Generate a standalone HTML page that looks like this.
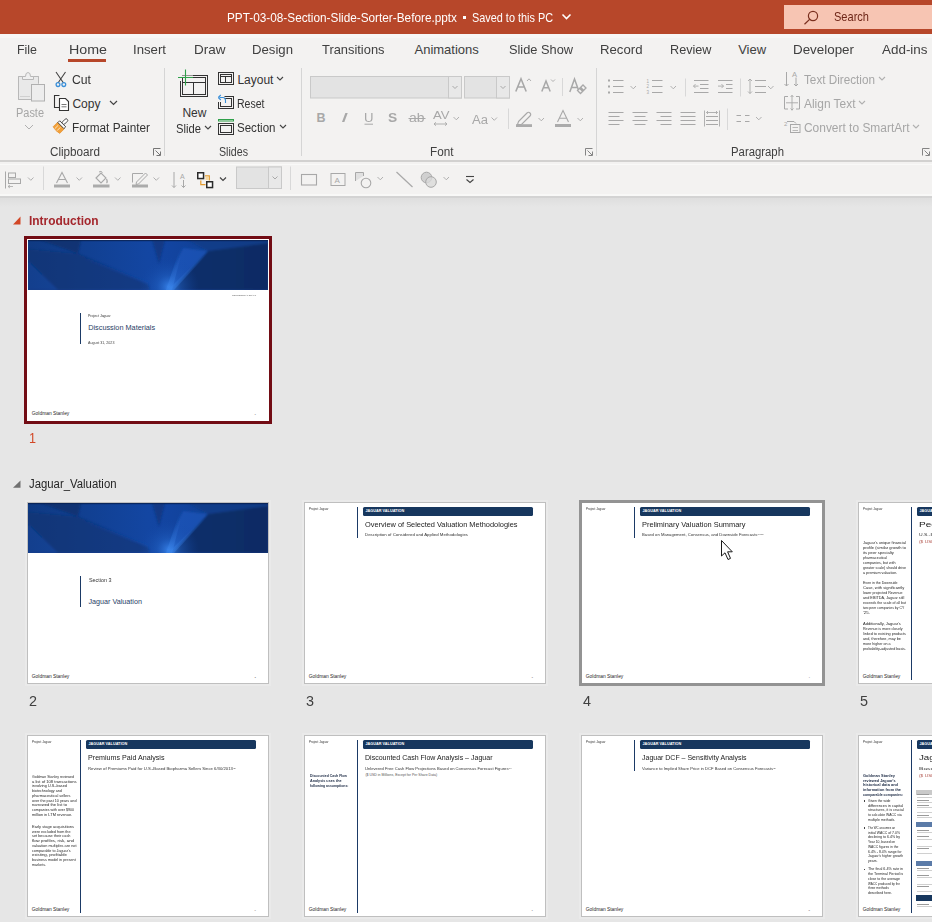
<!DOCTYPE html><html><head><meta charset="utf-8"><style>
html,body{margin:0;padding:0}
body{width:932px;height:922px;overflow:hidden;position:relative;background:#E6E6E6;font-family:'Liberation Sans', sans-serif}
</style></head><body>
<div style="position:absolute;left:0px;top:0px;width:932px;height:34px;background:#B7472A;"></div>
<div style="position:absolute;left:784px;top:5px;width:148px;height:24px;background:#F7C5B3;"></div>
<svg style="position:absolute;left:802px;top:9px;" width="18" height="16" viewBox="0 0 18 16"><circle cx="11" cy="7" r="4.6" fill="none" stroke="#7A2F1E" stroke-width="1.2"/><line x1="7.6" y1="10.4" x2="2.5" y2="15.3" stroke="#7A2F1E" stroke-width="1.3"/></svg>
<span id="t0" style="position:absolute;left:834.00px;top:10.25px;font-size:13px;line-height:13px;color:#6E2618;font-weight:400;white-space:nowrap;transform:scaleX(0.8495);transform-origin:0 0;">Search</span>
<span id="t1" style="position:absolute;left:227.00px;top:10.95px;font-size:13px;line-height:13px;color:#FFFFFF;font-weight:400;white-space:nowrap;transform:scaleX(0.9069);transform-origin:0 0;">PPT-03-08-Section-Slide-Sorter-Before.pptx</span>
<div style="position:absolute;left:462.5px;top:15.5px;width:3px;height:3px;background:#FFFFFF;"></div>
<span id="t2" style="position:absolute;left:471.50px;top:10.95px;font-size:13px;line-height:13px;color:#FFFFFF;font-weight:400;white-space:nowrap;transform:scaleX(0.8365);transform-origin:0 0;">Saved to this PC</span>
<svg style="position:absolute;left:561px;top:13px;" width="11" height="8" viewBox="0 0 11 8"><polyline points="1.5,1.5 5.5,5.5 9.5,1.5" fill="none" stroke="#fff" stroke-width="1.6"/></svg>
<div style="position:absolute;left:0px;top:34px;width:932px;height:126px;background:#F3F2F1;"></div>
<div style="position:absolute;left:0px;top:34px;width:932px;height:4px;background:#F7F6F5;"></div>
<div style="position:absolute;left:0px;top:160px;width:932px;height:2px;background:#D2D1D0;"></div>
<div style="position:absolute;left:0px;top:162px;width:932px;height:32px;background:#F3F2F1;"></div>
<div style="position:absolute;left:0px;top:163.5px;width:932px;height:1.5px;background:#F9F9F8;"></div>
<div style="position:absolute;left:0px;top:194px;width:932px;height:2px;background:#F8F8F7;"></div>
<div style="position:absolute;left:0px;top:196px;width:932px;height:2.2px;background:#D3D3D3;"></div>
<div style="position:absolute;left:0px;top:198.2px;width:932px;height:9px;background:linear-gradient(#DEDEDE,#E6E6E6);"></div>
<span id="t3" style="position:absolute;left:17.00px;top:43.25px;font-size:13px;line-height:13px;color:#404040;font-weight:400;white-space:nowrap;transform:scaleX(0.9545);transform-origin:0 0;">File</span>
<span id="t4" style="position:absolute;left:68.50px;top:43.25px;font-size:13px;line-height:13px;color:#404040;font-weight:400;white-space:nowrap;transform:scaleX(1.0955);transform-origin:0 0;">Home</span>
<span id="t5" style="position:absolute;left:133.00px;top:43.25px;font-size:13px;line-height:13px;color:#404040;font-weight:400;white-space:nowrap;transform:scaleX(1.0149);transform-origin:0 0;">Insert</span>
<span id="t6" style="position:absolute;left:194.00px;top:43.25px;font-size:13px;line-height:13px;color:#404040;font-weight:400;white-space:nowrap;transform:scaleX(1.0381);transform-origin:0 0;">Draw</span>
<span id="t7" style="position:absolute;left:252.00px;top:43.25px;font-size:13px;line-height:13px;color:#404040;font-weight:400;white-space:nowrap;transform:scaleX(1.0131);transform-origin:0 0;">Design</span>
<span id="t8" style="position:absolute;left:321.50px;top:43.25px;font-size:13px;line-height:13px;color:#404040;font-weight:400;white-space:nowrap;transform:scaleX(0.9903);transform-origin:0 0;">Transitions</span>
<span id="t9" style="position:absolute;left:414.50px;top:43.25px;font-size:13px;line-height:13px;color:#404040;font-weight:400;white-space:nowrap;">Animations</span>
<span id="t10" style="position:absolute;left:508.80px;top:43.25px;font-size:13px;line-height:13px;color:#404040;font-weight:400;white-space:nowrap;transform:scaleX(0.9839);transform-origin:0 0;">Slide Show</span>
<span id="t11" style="position:absolute;left:600.20px;top:43.25px;font-size:13px;line-height:13px;color:#404040;font-weight:400;white-space:nowrap;transform:scaleX(1.0138);transform-origin:0 0;">Record</span>
<span id="t12" style="position:absolute;left:670.00px;top:43.25px;font-size:13px;line-height:13px;color:#404040;font-weight:400;white-space:nowrap;transform:scaleX(0.9736);transform-origin:0 0;">Review</span>
<span id="t13" style="position:absolute;left:738.20px;top:43.25px;font-size:13px;line-height:13px;color:#404040;font-weight:400;white-space:nowrap;">View</span>
<span id="t14" style="position:absolute;left:793.00px;top:43.25px;font-size:13px;line-height:13px;color:#404040;font-weight:400;white-space:nowrap;transform:scaleX(1.0293);transform-origin:0 0;">Developer</span>
<span id="t15" style="position:absolute;left:882.40px;top:43.25px;font-size:13px;line-height:13px;color:#404040;font-weight:400;white-space:nowrap;transform:scaleX(1.0323);transform-origin:0 0;">Add-ins</span>
<div style="position:absolute;left:68px;top:59px;width:38px;height:3px;background:#B7472A;"></div>
<span id="t16" style="position:absolute;left:16.00px;top:107.00px;font-size:12px;line-height:12px;color:#A6A6A6;font-weight:400;white-space:nowrap;transform:scaleX(0.9124);transform-origin:0 0;">Paste</span>
<svg style="position:absolute;left:24px;top:124px;" width="10" height="6" viewBox="0 0 10 6"><polyline points="1,1 5,5 9,1" fill="none" stroke="#B0B0B0" stroke-width="1"/></svg>
<span id="t17" style="position:absolute;left:72.40px;top:73.60px;font-size:12px;line-height:12px;color:#333333;font-weight:400;white-space:nowrap;transform:scaleX(1.0167);transform-origin:0 0;">Cut</span>
<span id="t18" style="position:absolute;left:72.40px;top:97.70px;font-size:12px;line-height:12px;color:#333333;font-weight:400;white-space:nowrap;">Copy</span>
<svg style="position:absolute;left:109px;top:100px;" width="9" height="6" viewBox="0 0 9 6"><polyline points="1,1 4.5,4.5 8,1" fill="none" stroke="#444" stroke-width="1.2"/></svg>
<span id="t19" style="position:absolute;left:72.40px;top:121.70px;font-size:12px;line-height:12px;color:#333333;font-weight:400;white-space:nowrap;transform:scaleX(0.9829);transform-origin:0 0;">Format Painter</span>
<span id="t20" style="position:absolute;left:49.80px;top:145.80px;font-size:12px;line-height:12px;color:#404040;font-weight:400;white-space:nowrap;transform:scaleX(0.9732);transform-origin:0 0;">Clipboard</span>
<div style="position:absolute;left:164px;top:68px;width:1px;height:88px;background:#D5D5D5;"></div>
<span id="t21" style="position:absolute;left:182.40px;top:106.90px;font-size:12px;line-height:12px;color:#333333;font-weight:400;white-space:nowrap;">New</span>
<span id="t22" style="position:absolute;left:176.40px;top:122.60px;font-size:12px;line-height:12px;color:#333333;font-weight:400;white-space:nowrap;transform:scaleX(0.9368);transform-origin:0 0;">Slide</span>
<svg style="position:absolute;left:204px;top:125px;" width="8" height="6" viewBox="0 0 8 6"><polyline points="1,1 4,4 7,1" fill="none" stroke="#444" stroke-width="1.1"/></svg>
<span id="t23" style="position:absolute;left:237.40px;top:73.60px;font-size:12px;line-height:12px;color:#333333;font-weight:400;white-space:nowrap;">Layout</span>
<svg style="position:absolute;left:276px;top:76px;" width="8" height="6" viewBox="0 0 8 6"><polyline points="1,1 4,4 7,1" fill="none" stroke="#444" stroke-width="1.1"/></svg>
<span id="t24" style="position:absolute;left:237.40px;top:97.70px;font-size:12px;line-height:12px;color:#333333;font-weight:400;white-space:nowrap;transform:scaleX(0.8769);transform-origin:0 0;">Reset</span>
<span id="t25" style="position:absolute;left:237.40px;top:121.70px;font-size:12px;line-height:12px;color:#333333;font-weight:400;white-space:nowrap;transform:scaleX(0.9617);transform-origin:0 0;">Section</span>
<svg style="position:absolute;left:279px;top:124px;" width="8" height="6" viewBox="0 0 8 6"><polyline points="1,1 4,4 7,1" fill="none" stroke="#444" stroke-width="1.1"/></svg>
<span id="t26" style="position:absolute;left:218.50px;top:145.80px;font-size:12px;line-height:12px;color:#404040;font-weight:400;white-space:nowrap;transform:scaleX(0.8872);transform-origin:0 0;">Slides</span>
<div style="position:absolute;left:301px;top:68px;width:1px;height:88px;background:#D5D5D5;"></div>
<span id="t27" style="position:absolute;left:429.60px;top:145.80px;font-size:12px;line-height:12px;color:#404040;font-weight:400;white-space:nowrap;transform:scaleX(0.9785);transform-origin:0 0;">Font</span>
<div style="position:absolute;left:596px;top:68px;width:1px;height:88px;background:#D5D5D5;"></div>
<span id="t28" style="position:absolute;left:731.00px;top:145.80px;font-size:12px;line-height:12px;color:#404040;font-weight:400;white-space:nowrap;transform:scaleX(0.9456);transform-origin:0 0;">Paragraph</span>
<span id="t29" style="position:absolute;left:804.30px;top:73.60px;font-size:12px;line-height:12px;color:#A6A6A6;font-weight:400;white-space:nowrap;transform:scaleX(0.9766);transform-origin:0 0;">Text Direction</span>
<svg style="position:absolute;left:878px;top:76px;" width="8" height="6" viewBox="0 0 8 6"><polyline points="1,1 4,4 7,1" fill="none" stroke="#B0B0B0" stroke-width="1.1"/></svg>
<span id="t30" style="position:absolute;left:803.80px;top:97.70px;font-size:12px;line-height:12px;color:#A6A6A6;font-weight:400;white-space:nowrap;transform:scaleX(0.9940);transform-origin:0 0;">Align Text</span>
<svg style="position:absolute;left:857.5px;top:100px;" width="8" height="6" viewBox="0 0 8 6"><polyline points="1,1 4,4 7,1" fill="none" stroke="#B0B0B0" stroke-width="1.1"/></svg>
<span id="t31" style="position:absolute;left:803.80px;top:121.70px;font-size:12px;line-height:12px;color:#A6A6A6;font-weight:400;white-space:nowrap;transform:scaleX(0.9950);transform-origin:0 0;">Convert to SmartArt</span>
<svg style="position:absolute;left:912px;top:124px;" width="8" height="6" viewBox="0 0 8 6"><polyline points="1,1 4,4 7,1" fill="none" stroke="#B0B0B0" stroke-width="1.1"/></svg>
<svg style="position:absolute;left:13px;top:216px;" width="8" height="9" viewBox="0 0 8 9"><polygon points="7.5,0.5 7.5,8.5 0,8.5" fill="#D24726"/></svg>
<span id="t32" style="position:absolute;left:28.50px;top:214.60px;font-size:12px;line-height:12px;color:#A4262C;font-weight:700;white-space:nowrap;transform:scaleX(0.9931);transform-origin:0 0;">Introduction</span>
<span id="t33" style="position:absolute;left:28.50px;top:429.75px;font-size:15px;line-height:15px;color:#D24726;font-weight:400;white-space:nowrap;transform:scaleX(0.8390);transform-origin:0 0;">1</span>
<svg style="position:absolute;left:13px;top:480px;" width="8" height="8" viewBox="0 0 8 8"><polygon points="7.5,0.5 7.5,7.8 0,7.8" fill="#707070"/></svg>
<span id="t34" style="position:absolute;left:28.50px;top:477.80px;font-size:12px;line-height:12px;color:#262626;font-weight:400;white-space:nowrap;transform:scaleX(0.9458);transform-origin:0 0;">Jaguar_Valuation</span>
<span id="t35" style="position:absolute;left:316.50px;top:111.88px;font-size:12.5px;line-height:12.5px;color:#A8A8A8;font-weight:700;white-space:nowrap;">B</span>
<span id="t36" style="position:absolute;left:341.00px;top:111.88px;font-size:12.5px;line-height:12.5px;color:#A8A8A8;font-weight:400;white-space:nowrap;transform:scaleX(2.0090);transform-origin:0 0;font-style:italic;font-family:"Liberation Serif"">I</span>
<span id="t37" style="position:absolute;left:364.00px;top:111.80px;font-size:12px;line-height:12px;color:#A8A8A8;font-weight:400;white-space:nowrap;transform:scaleX(1.0955);transform-origin:0 0;">U</span>
<span id="t38" style="position:absolute;left:387.80px;top:112.17px;font-size:12.5px;line-height:12.5px;color:#A8A8A8;font-weight:700;white-space:nowrap;transform:scaleX(1.1026);transform-origin:0 0;">S</span>
<span id="t39" style="position:absolute;left:409.00px;top:112.30px;font-size:12px;line-height:12px;color:#A8A8A8;font-weight:400;white-space:nowrap;transform:scaleX(1.1602);transform-origin:0 0;">ab</span>
<span id="t40" style="position:absolute;left:432.50px;top:110.22px;font-size:11.5px;line-height:11.5px;color:#A8A8A8;font-weight:400;white-space:nowrap;transform:scaleX(1.1379);transform-origin:0 0;">AV</span>
<span id="t41" style="position:absolute;left:471.50px;top:113.80px;font-size:12px;line-height:12px;color:#A8A8A8;font-weight:400;white-space:nowrap;transform:scaleX(1.0894);transform-origin:0 0;">Aa</span>
<div style="position:absolute;left:24px;top:236px;width:248px;height:188px;background:#720C14;"></div>
<div style="position:absolute;left:27px;top:239px;width:242px;height:182px;background:#FFFFFF;"></div>
<svg style="position:absolute;left:28px;top:240px" width="240" height="50" viewBox="0 0 240 50"><defs>
<linearGradient id="bgGs1" x1="0" y1="0" x2="1" y2="0"><stop offset="0" stop-color="#0F3A82"/><stop offset="0.5" stop-color="#1346A2"/><stop offset="0.6" stop-color="#1244A0"/><stop offset="1" stop-color="#0F3A82"/></linearGradient>
<radialGradient id="glowGs1" cx="141" cy="47" r="30" gradientUnits="userSpaceOnUse"><stop offset="0" stop-color="#3A86EE" stop-opacity="0.9"/><stop offset="0.4" stop-color="#2465C8" stop-opacity="0.45"/><stop offset="1" stop-color="#1447A4" stop-opacity="0"/></radialGradient>
<linearGradient id="rayGs1" x1="0" y1="1" x2="0" y2="0"><stop offset="0" stop-color="#3D88EC" stop-opacity="0.8"/><stop offset="1" stop-color="#2A66C8" stop-opacity="0"/></linearGradient>
<linearGradient id="darkRs1" x1="0" y1="0" x2="1" y2="0"><stop offset="0" stop-color="#0C2F6C"/><stop offset="1" stop-color="#0B2C64"/></linearGradient>
</defs>
<filter id="blrs1" x="-10%" y="-30%" width="120%" height="160%"><feGaussianBlur stdDeviation="1.2"/></filter>
<rect x="0" y="0" width="240" height="50" fill="url(#bgGs1)"/>
<g filter="url(#blrs1)">
<polygon points="12,0 53,0 50,13.5" fill="#0B2C68" opacity="0.7"/>
<polygon points="0,9 50,13.5 120,43 122,50 30,50 0,21" fill="#0C3072" opacity="0.6"/>
<polygon points="0,21 0,50 30,50" fill="#1448A2" opacity="0.35"/>
<polygon points="56,18 120,42 122,45 60,20" fill="#1A55B8" opacity="0.4"/>
<polygon points="137,50 155,8 180,11 143,50" fill="#1B5CC4" opacity="0.55"/>
<polygon points="124,0 137,0 131,24" fill="#0C3070" opacity="0.55"/>
<polygon points="144,50 180,11 240,3 240,50" fill="url(#darkRs1)"/>
<polygon points="180,11 240,3 240,0 160,0" fill="#103C84" opacity="0.7"/>
</g>
<rect x="0" y="0" width="240" height="50" fill="url(#glowGs1)"/>
<polygon points="138,50 152,8 155,8 144,50" fill="url(#rayGs1)" opacity="0.6"/>
<polygon points="140,50 178,12 181,12 146,50" fill="url(#rayGs1)" opacity="0.5"/>
<rect x="0" y="0" width="240" height="1.2" fill="#0A2250" opacity="0.8"/>
</svg>
<span id="t42" style="position:absolute;left:232.00px;top:295.26px;font-size:2.4px;line-height:2.4px;color:#555;font-weight:400;white-space:nowrap;transform:scaleX(0.9203);transform-origin:0 0;">CONFIDENTIAL DRAFT</span>
<div style="position:absolute;left:80.3px;top:313px;width:1.1px;height:31px;background:#1B3A66;"></div>
<span id="t43" style="position:absolute;left:88.20px;top:314.58px;font-size:3.2px;line-height:3.2px;color:#333;font-weight:400;white-space:nowrap;transform:scaleX(1.0991);transform-origin:0 0;">Project Jaguar</span>
<span id="t44" style="position:absolute;left:88.20px;top:324.40px;font-size:7.3px;line-height:7.3px;color:#283E66;font-weight:400;white-space:nowrap;">Discussion Materials</span>
<span id="t45" style="position:absolute;left:88.20px;top:341.72px;font-size:3.5px;line-height:3.5px;color:#444;font-weight:400;white-space:nowrap;transform:scaleX(1.0353);transform-origin:0 0;">August 31, 2023</span>
<span id="t46" style="position:absolute;left:31.80px;top:412.03px;font-size:4.9px;line-height:4.9px;color:#262626;font-weight:400;white-space:nowrap;">Goldman Stanley</span>
<span id="t47" style="position:absolute;left:254.50px;top:413.88px;font-size:2.5px;line-height:2.5px;color:#666;font-weight:400;white-space:nowrap;">1</span>
<div style="position:absolute;left:25px;top:500px;width:246px;height:186px;background:#EAEAEA;"></div>
<div style="position:absolute;left:27px;top:502px;width:242px;height:182px;background:#BFBFBF;"></div>
<div style="position:absolute;left:28px;top:503px;width:240px;height:180px;background:#FFFFFF;"></div>
<svg style="position:absolute;left:28px;top:503px" width="240" height="50" viewBox="0 0 240 50"><defs>
<linearGradient id="bgGs2" x1="0" y1="0" x2="1" y2="0"><stop offset="0" stop-color="#0F3A82"/><stop offset="0.5" stop-color="#1346A2"/><stop offset="0.6" stop-color="#1244A0"/><stop offset="1" stop-color="#0F3A82"/></linearGradient>
<radialGradient id="glowGs2" cx="141" cy="47" r="30" gradientUnits="userSpaceOnUse"><stop offset="0" stop-color="#3A86EE" stop-opacity="0.9"/><stop offset="0.4" stop-color="#2465C8" stop-opacity="0.45"/><stop offset="1" stop-color="#1447A4" stop-opacity="0"/></radialGradient>
<linearGradient id="rayGs2" x1="0" y1="1" x2="0" y2="0"><stop offset="0" stop-color="#3D88EC" stop-opacity="0.8"/><stop offset="1" stop-color="#2A66C8" stop-opacity="0"/></linearGradient>
<linearGradient id="darkRs2" x1="0" y1="0" x2="1" y2="0"><stop offset="0" stop-color="#0C2F6C"/><stop offset="1" stop-color="#0B2C64"/></linearGradient>
</defs>
<filter id="blrs2" x="-10%" y="-30%" width="120%" height="160%"><feGaussianBlur stdDeviation="1.2"/></filter>
<rect x="0" y="0" width="240" height="50" fill="url(#bgGs2)"/>
<g filter="url(#blrs2)">
<polygon points="12,0 53,0 50,13.5" fill="#0B2C68" opacity="0.7"/>
<polygon points="0,9 50,13.5 120,43 122,50 30,50 0,21" fill="#0C3072" opacity="0.6"/>
<polygon points="0,21 0,50 30,50" fill="#1448A2" opacity="0.35"/>
<polygon points="56,18 120,42 122,45 60,20" fill="#1A55B8" opacity="0.4"/>
<polygon points="137,50 155,8 180,11 143,50" fill="#1B5CC4" opacity="0.55"/>
<polygon points="124,0 137,0 131,24" fill="#0C3070" opacity="0.55"/>
<polygon points="144,50 180,11 240,3 240,50" fill="url(#darkRs2)"/>
<polygon points="180,11 240,3 240,0 160,0" fill="#103C84" opacity="0.7"/>
</g>
<rect x="0" y="0" width="240" height="50" fill="url(#glowGs2)"/>
<polygon points="138,50 152,8 155,8 144,50" fill="url(#rayGs2)" opacity="0.6"/>
<polygon points="140,50 178,12 181,12 146,50" fill="url(#rayGs2)" opacity="0.5"/>
<rect x="0" y="0" width="240" height="1.2" fill="#0A2250" opacity="0.8"/>
</svg>
<div style="position:absolute;left:80.3px;top:576px;width:1.1px;height:31.4px;background:#1B3A66;"></div>
<span id="t48" style="position:absolute;left:88.50px;top:577.88px;font-size:5.2px;line-height:5.2px;color:#333;font-weight:400;white-space:nowrap;transform:scaleX(1.0397);transform-origin:0 0;">Section 3</span>
<span id="t49" style="position:absolute;left:88.50px;top:598.08px;font-size:7.2px;line-height:7.2px;color:#283E66;font-weight:400;white-space:nowrap;">Jaguar Valuation</span>
<span id="t50" style="position:absolute;left:31.80px;top:675.04px;font-size:4.9px;line-height:4.9px;color:#262626;font-weight:400;white-space:nowrap;">Goldman Stanley</span>
<span id="t51" style="position:absolute;left:254.50px;top:676.88px;font-size:2.5px;line-height:2.5px;color:#666;font-weight:400;white-space:nowrap;">2</span>
<div style="position:absolute;left:302px;top:500px;width:246px;height:186px;background:#EAEAEA;"></div>
<div style="position:absolute;left:304px;top:502px;width:242px;height:182px;background:#BFBFBF;"></div>
<div style="position:absolute;left:305px;top:503px;width:240px;height:180px;background:#FFFFFF;"></div>
<span id="t52" style="position:absolute;left:308.80px;top:507.84px;font-size:2.9px;line-height:2.9px;color:#333;font-weight:400;white-space:nowrap;transform:scaleX(1.0461);transform-origin:0 0;">Project Jaguar</span>
<div style="position:absolute;left:357.3px;top:507.2px;width:1.1px;height:30.8px;background:#1B3A66;"></div>
<div style="position:absolute;left:363px;top:507.4px;width:170px;height:8.2px;background:#17375E;border-radius:1.5px"></div>
<span id="t53" style="position:absolute;left:365.50px;top:510.07px;font-size:3.8px;line-height:3.8px;color:#FFFFFF;font-weight:700;white-space:nowrap;">JAGUAR VALUATION</span>
<span id="t54" style="position:absolute;left:365.40px;top:520.59px;font-size:7.3px;line-height:7.3px;color:#222222;font-weight:400;white-space:nowrap;transform:scaleX(1.0142);transform-origin:0 0;">Overview of Selected Valuation Methodologies</span>
<span id="t55" style="position:absolute;left:365.40px;top:532.95px;font-size:4.3px;line-height:4.3px;color:#333;font-weight:400;white-space:nowrap;transform:scaleX(1.0073);transform-origin:0 0;">Description of Considered and Applied Methodologies</span>
<span id="t56" style="position:absolute;left:308.80px;top:675.04px;font-size:4.9px;line-height:4.9px;color:#262626;font-weight:400;white-space:nowrap;">Goldman Stanley</span>
<span id="t57" style="position:absolute;left:531.50px;top:676.88px;font-size:2.5px;line-height:2.5px;color:#666;font-weight:400;white-space:nowrap;">3</span>
<div style="position:absolute;left:579px;top:500px;width:246px;height:186px;background:#939393;"></div>
<div style="position:absolute;left:582px;top:503px;width:240px;height:180px;background:#FFFFFF;"></div>
<span id="t58" style="position:absolute;left:585.80px;top:507.84px;font-size:2.9px;line-height:2.9px;color:#333;font-weight:400;white-space:nowrap;transform:scaleX(1.0461);transform-origin:0 0;">Project Jaguar</span>
<div style="position:absolute;left:634.3px;top:507.2px;width:1.1px;height:30.8px;background:#1B3A66;"></div>
<div style="position:absolute;left:640px;top:507.4px;width:170px;height:8.2px;background:#17375E;border-radius:1.5px"></div>
<span id="t59" style="position:absolute;left:642.50px;top:510.07px;font-size:3.8px;line-height:3.8px;color:#FFFFFF;font-weight:700;white-space:nowrap;">JAGUAR VALUATION</span>
<span id="t60" style="position:absolute;left:642.40px;top:520.59px;font-size:7.3px;line-height:7.3px;color:#222222;font-weight:400;white-space:nowrap;transform:scaleX(1.0181);transform-origin:0 0;">Preliminary Valuation Summary</span>
<span id="t61" style="position:absolute;left:642.40px;top:533.12px;font-size:4.1px;line-height:4.1px;color:#333;font-weight:400;white-space:nowrap;transform:scaleX(1.0268);transform-origin:0 0;">Based on Management, Consensus, and Downside Forecasts<sup style="font-size:60%;vertical-align:top">(1)(2)</sup></span>
<span id="t62" style="position:absolute;left:585.80px;top:675.04px;font-size:4.9px;line-height:4.9px;color:#262626;font-weight:400;white-space:nowrap;">Goldman Stanley</span>
<span id="t63" style="position:absolute;left:808.50px;top:676.88px;font-size:2.5px;line-height:2.5px;color:#666;font-weight:400;white-space:nowrap;">4</span>
<div style="position:absolute;left:856px;top:500px;width:246px;height:186px;background:#EAEAEA;"></div>
<div style="position:absolute;left:858px;top:502px;width:242px;height:182px;background:#BFBFBF;"></div>
<div style="position:absolute;left:859px;top:503px;width:240px;height:180px;background:#FFFFFF;"></div>
<span id="t64" style="position:absolute;left:862.80px;top:507.84px;font-size:2.9px;line-height:2.9px;color:#333;font-weight:400;white-space:nowrap;transform:scaleX(1.0461);transform-origin:0 0;">Project Jaguar</span>
<div style="position:absolute;left:911.3px;top:507.2px;width:1.1px;height:172.5px;background:#1B3A66;"></div>
<div style="position:absolute;left:917px;top:507.4px;width:170px;height:8.2px;background:#17375E;border-radius:1.5px"></div>
<span id="t65" style="position:absolute;left:919.50px;top:510.07px;font-size:3.8px;line-height:3.8px;color:#FFFFFF;font-weight:700;white-space:nowrap;">JAGUAR VALUATION</span>
<span id="t66" style="position:absolute;left:919.40px;top:520.59px;font-size:7.3px;line-height:7.3px;color:#222222;font-weight:400;white-space:nowrap;transform:scaleX(1.3761);transform-origin:0 0;">Peer Trading Comparables</span>
<span id="t67" style="position:absolute;left:919.40px;top:533.12px;font-size:4.1px;line-height:4.1px;color:#333;font-weight:400;white-space:nowrap;transform:scaleX(1.2237);transform-origin:0 0;">U.S.-Based Specialty Pharmaceutical Companies</span>
<span id="t68" style="position:absolute;left:919.40px;top:541.02px;font-size:3.5px;line-height:3.5px;color:#B0524A;font-weight:400;white-space:nowrap;transform:scaleX(1.3801);transform-origin:0 0;">($ USD in Millions)</span>
<span id="t69" style="position:absolute;left:863.00px;top:540.58px;font-size:3.9px;line-height:3.9px;color:#262626;font-weight:400;white-space:nowrap;transform:scaleX(1.0066);transform-origin:0 0;">Jaguar's unique financial</span>
<span id="t70" style="position:absolute;left:863.00px;top:545.58px;font-size:3.9px;line-height:3.9px;color:#262626;font-weight:400;white-space:nowrap;transform:scaleX(1.0412);transform-origin:0 0;">profile (similar growth to</span>
<span id="t71" style="position:absolute;left:863.00px;top:550.58px;font-size:3.9px;line-height:3.9px;color:#262626;font-weight:400;white-space:nowrap;transform:scaleX(1.0682);transform-origin:0 0;">its peer specialty</span>
<span id="t72" style="position:absolute;left:863.00px;top:555.58px;font-size:3.9px;line-height:3.9px;color:#262626;font-weight:400;white-space:nowrap;transform:scaleX(0.9124);transform-origin:0 0;">pharmaceutical</span>
<span id="t73" style="position:absolute;left:863.00px;top:560.58px;font-size:3.9px;line-height:3.9px;color:#262626;font-weight:400;white-space:nowrap;transform:scaleX(0.9503);transform-origin:0 0;">companies, but with</span>
<span id="t74" style="position:absolute;left:863.00px;top:565.58px;font-size:3.9px;line-height:3.9px;color:#262626;font-weight:400;white-space:nowrap;transform:scaleX(0.9376);transform-origin:0 0;">greater scale) should drive</span>
<span id="t75" style="position:absolute;left:863.00px;top:570.58px;font-size:3.9px;line-height:3.9px;color:#262626;font-weight:400;white-space:nowrap;transform:scaleX(0.9522);transform-origin:0 0;">a premium valuation.</span>
<span id="t76" style="position:absolute;left:863.00px;top:581.08px;font-size:3.9px;line-height:3.9px;color:#262626;font-weight:400;white-space:nowrap;transform:scaleX(0.9139);transform-origin:0 0;">Even in the Downside</span>
<span id="t77" style="position:absolute;left:863.00px;top:586.08px;font-size:3.9px;line-height:3.9px;color:#262626;font-weight:400;white-space:nowrap;transform:scaleX(1.0488);transform-origin:0 0;">Case, with significantly</span>
<span id="t78" style="position:absolute;left:863.00px;top:591.08px;font-size:3.9px;line-height:3.9px;color:#262626;font-weight:400;white-space:nowrap;transform:scaleX(0.9190);transform-origin:0 0;">lower projected Revenue</span>
<span id="t79" style="position:absolute;left:863.00px;top:596.08px;font-size:3.9px;line-height:3.9px;color:#262626;font-weight:400;white-space:nowrap;transform:scaleX(0.9738);transform-origin:0 0;">and EBITDA, Jaguar still</span>
<span id="t80" style="position:absolute;left:863.00px;top:601.08px;font-size:3.9px;line-height:3.9px;color:#262626;font-weight:400;white-space:nowrap;transform:scaleX(0.9161);transform-origin:0 0;">exceeds the scale of all but</span>
<span id="t81" style="position:absolute;left:863.00px;top:606.08px;font-size:3.9px;line-height:3.9px;color:#262626;font-weight:400;white-space:nowrap;transform:scaleX(0.8877);transform-origin:0 0;">two peer companies by CY</span>
<span id="t82" style="position:absolute;left:863.00px;top:611.08px;font-size:3.9px;line-height:3.9px;color:#262626;font-weight:400;white-space:nowrap;transform:scaleX(1.1176);transform-origin:0 0;">'25.</span>
<span id="t83" style="position:absolute;left:863.00px;top:622.08px;font-size:3.9px;line-height:3.9px;color:#262626;font-weight:400;white-space:nowrap;transform:scaleX(1.0407);transform-origin:0 0;">Additionally, Jaguar's</span>
<span id="t84" style="position:absolute;left:863.00px;top:627.08px;font-size:3.9px;line-height:3.9px;color:#262626;font-weight:400;white-space:nowrap;transform:scaleX(0.9332);transform-origin:0 0;">Revenue is more closely</span>
<span id="t85" style="position:absolute;left:863.00px;top:632.08px;font-size:3.9px;line-height:3.9px;color:#262626;font-weight:400;white-space:nowrap;transform:scaleX(0.9602);transform-origin:0 0;">linked to existing products</span>
<span id="t86" style="position:absolute;left:863.00px;top:637.08px;font-size:3.9px;line-height:3.9px;color:#262626;font-weight:400;white-space:nowrap;transform:scaleX(0.9664);transform-origin:0 0;">and, therefore, may be</span>
<span id="t87" style="position:absolute;left:863.00px;top:642.08px;font-size:3.9px;line-height:3.9px;color:#262626;font-weight:400;white-space:nowrap;transform:scaleX(0.9354);transform-origin:0 0;">more higher on a</span>
<span id="t88" style="position:absolute;left:863.00px;top:647.08px;font-size:3.9px;line-height:3.9px;color:#262626;font-weight:400;white-space:nowrap;transform:scaleX(0.9559);transform-origin:0 0;">probability-adjusted basis.</span>
<span id="t89" style="position:absolute;left:862.80px;top:675.04px;font-size:4.9px;line-height:4.9px;color:#262626;font-weight:400;white-space:nowrap;">Goldman Stanley</span>
<span id="t90" style="position:absolute;left:1085.50px;top:676.88px;font-size:2.5px;line-height:2.5px;color:#666;font-weight:400;white-space:nowrap;">5</span>
<div style="position:absolute;left:932px;top:490px;width:10px;height:200px;background:#E6E6E6;"></div>
<div style="position:absolute;left:25px;top:733px;width:246px;height:186px;background:#EAEAEA;"></div>
<div style="position:absolute;left:27px;top:735px;width:242px;height:182px;background:#BFBFBF;"></div>
<div style="position:absolute;left:28px;top:736px;width:240px;height:180px;background:#FFFFFF;"></div>
<span id="t91" style="position:absolute;left:31.80px;top:740.83px;font-size:2.9px;line-height:2.9px;color:#333;font-weight:400;white-space:nowrap;transform:scaleX(1.0461);transform-origin:0 0;">Project Jaguar</span>
<div style="position:absolute;left:80.3px;top:740.2px;width:1.1px;height:172.5px;background:#1B3A66;"></div>
<div style="position:absolute;left:86px;top:740.4px;width:170px;height:8.2px;background:#17375E;border-radius:1.5px"></div>
<span id="t92" style="position:absolute;left:88.50px;top:743.07px;font-size:3.8px;line-height:3.8px;color:#FFFFFF;font-weight:700;white-space:nowrap;">JAGUAR VALUATION</span>
<span id="t93" style="position:absolute;left:88.40px;top:753.59px;font-size:7.3px;line-height:7.3px;color:#222222;font-weight:400;white-space:nowrap;transform:scaleX(0.9772);transform-origin:0 0;">Premiums Paid Analysis</span>
<span id="t94" style="position:absolute;left:88.40px;top:767.27px;font-size:4.15px;line-height:4.15px;color:#333;font-weight:400;white-space:nowrap;transform:scaleX(1.0219);transform-origin:0 0;">Review of Premiums Paid for U.S.-Based Biopharma Sellers Since 6/30/2013<sup style="font-size:60%;vertical-align:top">(1)</sup></span>
<span id="t95" style="position:absolute;left:32.00px;top:774.98px;font-size:3.9px;line-height:3.9px;color:#262626;font-weight:400;white-space:nowrap;transform:scaleX(0.9032);transform-origin:0 0;">Goldman Stanley reviewed</span>
<span id="t96" style="position:absolute;left:32.00px;top:779.70px;font-size:3.9px;line-height:3.9px;color:#262626;font-weight:400;white-space:nowrap;transform:scaleX(1.0603);transform-origin:0 0;">a list of 108 transactions</span>
<span id="t97" style="position:absolute;left:32.00px;top:784.42px;font-size:3.9px;line-height:3.9px;color:#262626;font-weight:400;white-space:nowrap;transform:scaleX(0.9807);transform-origin:0 0;">involving U.S.-based</span>
<span id="t98" style="position:absolute;left:32.00px;top:789.14px;font-size:3.9px;line-height:3.9px;color:#262626;font-weight:400;white-space:nowrap;transform:scaleX(0.9416);transform-origin:0 0;">biotechnology and</span>
<span id="t99" style="position:absolute;left:32.00px;top:793.86px;font-size:3.9px;line-height:3.9px;color:#262626;font-weight:400;white-space:nowrap;transform:scaleX(0.9944);transform-origin:0 0;">pharmaceutical sellers</span>
<span id="t100" style="position:absolute;left:32.00px;top:798.58px;font-size:3.9px;line-height:3.9px;color:#262626;font-weight:400;white-space:nowrap;transform:scaleX(0.9658);transform-origin:0 0;">over the past 10 years and</span>
<span id="t101" style="position:absolute;left:32.00px;top:803.30px;font-size:3.9px;line-height:3.9px;color:#262626;font-weight:400;white-space:nowrap;transform:scaleX(1.0646);transform-origin:0 0;">narrowed the list to</span>
<span id="t102" style="position:absolute;left:32.00px;top:808.02px;font-size:3.9px;line-height:3.9px;color:#262626;font-weight:400;white-space:nowrap;transform:scaleX(0.9291);transform-origin:0 0;">companies with over $900</span>
<span id="t103" style="position:absolute;left:32.00px;top:812.74px;font-size:3.9px;line-height:3.9px;color:#262626;font-weight:400;white-space:nowrap;transform:scaleX(1.0078);transform-origin:0 0;">million in LTM revenue.</span>
<span id="t104" style="position:absolute;left:32.00px;top:824.98px;font-size:3.9px;line-height:3.9px;color:#262626;font-weight:400;white-space:nowrap;transform:scaleX(1.0275);transform-origin:0 0;">Early stage acquisitions</span>
<span id="t105" style="position:absolute;left:32.00px;top:829.70px;font-size:3.9px;line-height:3.9px;color:#262626;font-weight:400;white-space:nowrap;transform:scaleX(0.9517);transform-origin:0 0;">were excluded from the</span>
<span id="t106" style="position:absolute;left:32.00px;top:834.42px;font-size:3.9px;line-height:3.9px;color:#262626;font-weight:400;white-space:nowrap;transform:scaleX(0.9888);transform-origin:0 0;">set because their cash</span>
<span id="t107" style="position:absolute;left:32.00px;top:839.14px;font-size:3.9px;line-height:3.9px;color:#262626;font-weight:400;white-space:nowrap;transform:scaleX(1.1223);transform-origin:0 0;">flow profiles, risk, and</span>
<span id="t108" style="position:absolute;left:32.00px;top:843.86px;font-size:3.9px;line-height:3.9px;color:#262626;font-weight:400;white-space:nowrap;transform:scaleX(0.9844);transform-origin:0 0;">valuation multiples are not</span>
<span id="t109" style="position:absolute;left:32.00px;top:848.58px;font-size:3.9px;line-height:3.9px;color:#262626;font-weight:400;white-space:nowrap;transform:scaleX(0.9547);transform-origin:0 0;">comparable to Jaguar's</span>
<span id="t110" style="position:absolute;left:32.00px;top:853.30px;font-size:3.9px;line-height:3.9px;color:#262626;font-weight:400;white-space:nowrap;transform:scaleX(1.1161);transform-origin:0 0;">existing, profitable</span>
<span id="t111" style="position:absolute;left:32.00px;top:858.02px;font-size:3.9px;line-height:3.9px;color:#262626;font-weight:400;white-space:nowrap;transform:scaleX(0.9679);transform-origin:0 0;">business model in present</span>
<span id="t112" style="position:absolute;left:32.00px;top:862.74px;font-size:3.9px;line-height:3.9px;color:#262626;font-weight:400;white-space:nowrap;transform:scaleX(0.9382);transform-origin:0 0;">markets.</span>
<span id="t113" style="position:absolute;left:31.80px;top:908.04px;font-size:4.9px;line-height:4.9px;color:#262626;font-weight:400;white-space:nowrap;">Goldman Stanley</span>
<span id="t114" style="position:absolute;left:254.50px;top:909.88px;font-size:2.5px;line-height:2.5px;color:#666;font-weight:400;white-space:nowrap;">6</span>
<div style="position:absolute;left:302px;top:733px;width:246px;height:186px;background:#EAEAEA;"></div>
<div style="position:absolute;left:304px;top:735px;width:242px;height:182px;background:#BFBFBF;"></div>
<div style="position:absolute;left:305px;top:736px;width:240px;height:180px;background:#FFFFFF;"></div>
<span id="t115" style="position:absolute;left:308.80px;top:740.83px;font-size:2.9px;line-height:2.9px;color:#333;font-weight:400;white-space:nowrap;transform:scaleX(1.0461);transform-origin:0 0;">Project Jaguar</span>
<div style="position:absolute;left:357.3px;top:740.2px;width:1.1px;height:172.5px;background:#1B3A66;"></div>
<div style="position:absolute;left:363px;top:740.4px;width:170px;height:8.2px;background:#17375E;border-radius:1.5px"></div>
<span id="t116" style="position:absolute;left:365.50px;top:743.07px;font-size:3.8px;line-height:3.8px;color:#FFFFFF;font-weight:700;white-space:nowrap;">JAGUAR VALUATION</span>
<span id="t117" style="position:absolute;left:365.40px;top:753.59px;font-size:7.3px;line-height:7.3px;color:#222222;font-weight:400;white-space:nowrap;transform:scaleX(0.9642);transform-origin:0 0;">Discounted Cash Flow Analysis – Jaguar</span>
<span id="t118" style="position:absolute;left:365.40px;top:766.81px;font-size:4.1px;line-height:4.1px;color:#333;font-weight:400;white-space:nowrap;transform:scaleX(1.0105);transform-origin:0 0;">Unlevered Free Cash Flow Projections Based on Consensus Forecast Figures<sup style="font-size:60%;vertical-align:top">(1)</sup></span>
<span id="t119" style="position:absolute;left:365.40px;top:774.02px;font-size:3.5px;line-height:3.5px;color:#555;font-weight:400;white-space:nowrap;">($ USD in Millions, Except for Per Share Data)</span>
<span id="t120" style="position:absolute;left:309.50px;top:774.18px;font-size:3.9px;line-height:3.9px;color:#1C2A44;font-weight:700;white-space:nowrap;transform:scaleX(0.8866);transform-origin:0 0;">Discounted Cash Flow</span>
<span id="t121" style="position:absolute;left:309.50px;top:778.93px;font-size:3.9px;line-height:3.9px;color:#1C2A44;font-weight:700;white-space:nowrap;transform:scaleX(0.9582);transform-origin:0 0;">Analysis uses the</span>
<span id="t122" style="position:absolute;left:309.50px;top:783.68px;font-size:3.9px;line-height:3.9px;color:#1C2A44;font-weight:700;white-space:nowrap;transform:scaleX(0.8860);transform-origin:0 0;">following assumptions:</span>
<span id="t123" style="position:absolute;left:308.80px;top:908.04px;font-size:4.9px;line-height:4.9px;color:#262626;font-weight:400;white-space:nowrap;">Goldman Stanley</span>
<span id="t124" style="position:absolute;left:531.50px;top:909.88px;font-size:2.5px;line-height:2.5px;color:#666;font-weight:400;white-space:nowrap;">7</span>
<div style="position:absolute;left:579px;top:733px;width:246px;height:186px;background:#EAEAEA;"></div>
<div style="position:absolute;left:581px;top:735px;width:242px;height:182px;background:#BFBFBF;"></div>
<div style="position:absolute;left:582px;top:736px;width:240px;height:180px;background:#FFFFFF;"></div>
<span id="t125" style="position:absolute;left:585.80px;top:740.83px;font-size:2.9px;line-height:2.9px;color:#333;font-weight:400;white-space:nowrap;transform:scaleX(1.0461);transform-origin:0 0;">Project Jaguar</span>
<div style="position:absolute;left:634.3px;top:740.2px;width:1.1px;height:30.8px;background:#1B3A66;"></div>
<div style="position:absolute;left:640px;top:740.4px;width:170px;height:8.2px;background:#17375E;border-radius:1.5px"></div>
<span id="t126" style="position:absolute;left:642.50px;top:743.07px;font-size:3.8px;line-height:3.8px;color:#FFFFFF;font-weight:700;white-space:nowrap;">JAGUAR VALUATION</span>
<span id="t127" style="position:absolute;left:642.40px;top:753.59px;font-size:7.3px;line-height:7.3px;color:#222222;font-weight:400;white-space:nowrap;transform:scaleX(0.9579);transform-origin:0 0;">Jaguar DCF – Sensitivity Analysis</span>
<span id="t128" style="position:absolute;left:642.40px;top:767.12px;font-size:4.1px;line-height:4.1px;color:#333;font-weight:400;white-space:nowrap;transform:scaleX(1.0052);transform-origin:0 0;">Variance to Implied Share Price in DCF Based on Consensus Forecasts<sup style="font-size:60%;vertical-align:top">(1)</sup></span>
<span id="t129" style="position:absolute;left:585.80px;top:908.04px;font-size:4.9px;line-height:4.9px;color:#262626;font-weight:400;white-space:nowrap;">Goldman Stanley</span>
<span id="t130" style="position:absolute;left:808.50px;top:909.88px;font-size:2.5px;line-height:2.5px;color:#666;font-weight:400;white-space:nowrap;">8</span>
<div style="position:absolute;left:856px;top:733px;width:246px;height:186px;background:#EAEAEA;"></div>
<div style="position:absolute;left:858px;top:735px;width:242px;height:182px;background:#BFBFBF;"></div>
<div style="position:absolute;left:859px;top:736px;width:240px;height:180px;background:#FFFFFF;"></div>
<span id="t131" style="position:absolute;left:862.80px;top:740.83px;font-size:2.9px;line-height:2.9px;color:#333;font-weight:400;white-space:nowrap;transform:scaleX(1.0461);transform-origin:0 0;">Project Jaguar</span>
<div style="position:absolute;left:911.3px;top:740.2px;width:1.1px;height:172.5px;background:#1B3A66;"></div>
<div style="position:absolute;left:917px;top:740.4px;width:170px;height:8.2px;background:#17375E;border-radius:1.5px"></div>
<span id="t132" style="position:absolute;left:919.50px;top:743.07px;font-size:3.8px;line-height:3.8px;color:#FFFFFF;font-weight:700;white-space:nowrap;">JAGUAR VALUATION</span>
<span id="t133" style="position:absolute;left:919.40px;top:753.59px;font-size:7.3px;line-height:7.3px;color:#222222;font-weight:400;white-space:nowrap;transform:scaleX(1.3306);transform-origin:0 0;">Jaguar WACC Analysis</span>
<span id="t134" style="position:absolute;left:919.40px;top:767.12px;font-size:4.1px;line-height:4.1px;color:#333;font-weight:400;white-space:nowrap;transform:scaleX(1.6197);transform-origin:0 0;">Based on Multiple Methods</span>
<span id="t135" style="position:absolute;left:919.40px;top:774.52px;font-size:3.5px;line-height:3.5px;color:#B0524A;font-weight:400;white-space:nowrap;transform:scaleX(1.3801);transform-origin:0 0;">($ USD in Millions)</span>
<span id="t136" style="position:absolute;left:863.00px;top:775.27px;font-size:3.8px;line-height:3.8px;color:#1C2A44;font-weight:700;white-space:nowrap;transform:scaleX(1.0317);transform-origin:0 0;">Goldman Stanley</span>
<span id="t137" style="position:absolute;left:863.00px;top:779.87px;font-size:3.8px;line-height:3.8px;color:#1C2A44;font-weight:700;white-space:nowrap;transform:scaleX(0.9914);transform-origin:0 0;">reviewed Jaguar's</span>
<span id="t138" style="position:absolute;left:863.00px;top:784.47px;font-size:3.8px;line-height:3.8px;color:#1C2A44;font-weight:700;white-space:nowrap;transform:scaleX(1.0428);transform-origin:0 0;">historical data and</span>
<span id="t139" style="position:absolute;left:863.00px;top:789.07px;font-size:3.8px;line-height:3.8px;color:#1C2A44;font-weight:700;white-space:nowrap;transform:scaleX(1.0236);transform-origin:0 0;">information from the</span>
<span id="t140" style="position:absolute;left:863.00px;top:793.67px;font-size:3.8px;line-height:3.8px;color:#1C2A44;font-weight:700;white-space:nowrap;transform:scaleX(0.9202);transform-origin:0 0;">comparable companies:</span>
<div style="position:absolute;left:863.5px;top:800.3px;width:1.3px;height:1.3px;background:#444;"></div>
<span id="t141" style="position:absolute;left:867.50px;top:799.77px;font-size:3.8px;line-height:3.8px;color:#262626;font-weight:400;white-space:nowrap;transform:scaleX(0.8915);transform-origin:0 0;">Given the wide</span>
<span id="t142" style="position:absolute;left:867.50px;top:804.52px;font-size:3.8px;line-height:3.8px;color:#262626;font-weight:400;white-space:nowrap;transform:scaleX(1.0189);transform-origin:0 0;">differences in capital</span>
<span id="t143" style="position:absolute;left:867.50px;top:809.27px;font-size:3.8px;line-height:3.8px;color:#262626;font-weight:400;white-space:nowrap;transform:scaleX(0.9859);transform-origin:0 0;">structures, it is crucial</span>
<span id="t144" style="position:absolute;left:867.50px;top:814.02px;font-size:3.8px;line-height:3.8px;color:#262626;font-weight:400;white-space:nowrap;transform:scaleX(0.8927);transform-origin:0 0;">to calculate WACC via</span>
<span id="t145" style="position:absolute;left:867.50px;top:818.77px;font-size:3.8px;line-height:3.8px;color:#262626;font-weight:400;white-space:nowrap;transform:scaleX(0.9138);transform-origin:0 0;">multiple methods.</span>
<div style="position:absolute;left:863.5px;top:827.3px;width:1.3px;height:1.3px;background:#444;"></div>
<span id="t146" style="position:absolute;left:867.50px;top:826.77px;font-size:3.8px;line-height:3.8px;color:#262626;font-weight:400;white-space:nowrap;transform:scaleX(0.7672);transform-origin:0 0;">The WC assumes an</span>
<span id="t147" style="position:absolute;left:867.50px;top:831.52px;font-size:3.8px;line-height:3.8px;color:#262626;font-weight:400;white-space:nowrap;transform:scaleX(0.9114);transform-origin:0 0;">initial WACC of 7.0%</span>
<span id="t148" style="position:absolute;left:867.50px;top:836.27px;font-size:3.8px;line-height:3.8px;color:#262626;font-weight:400;white-space:nowrap;transform:scaleX(0.9416);transform-origin:0 0;">declining to 6.4% by</span>
<span id="t149" style="position:absolute;left:867.50px;top:841.02px;font-size:3.8px;line-height:3.8px;color:#262626;font-weight:400;white-space:nowrap;transform:scaleX(0.8864);transform-origin:0 0;">Year 10, based on</span>
<span id="t150" style="position:absolute;left:867.50px;top:845.77px;font-size:3.8px;line-height:3.8px;color:#262626;font-weight:400;white-space:nowrap;transform:scaleX(0.8872);transform-origin:0 0;">WACC figures in the</span>
<span id="t151" style="position:absolute;left:867.50px;top:850.52px;font-size:3.8px;line-height:3.8px;color:#262626;font-weight:400;white-space:nowrap;transform:scaleX(0.9096);transform-origin:0 0;">6.4% - 8.4% range for</span>
<span id="t152" style="position:absolute;left:867.50px;top:855.27px;font-size:3.8px;line-height:3.8px;color:#262626;font-weight:400;white-space:nowrap;transform:scaleX(0.9191);transform-origin:0 0;">Jaguar's higher growth</span>
<span id="t153" style="position:absolute;left:867.50px;top:860.02px;font-size:3.8px;line-height:3.8px;color:#262626;font-weight:400;white-space:nowrap;transform:scaleX(0.9281);transform-origin:0 0;">years.</span>
<div style="position:absolute;left:863.5px;top:868.8px;width:1.3px;height:1.3px;background:#444;"></div>
<span id="t154" style="position:absolute;left:867.50px;top:868.27px;font-size:3.8px;line-height:3.8px;color:#262626;font-weight:400;white-space:nowrap;transform:scaleX(0.9808);transform-origin:0 0;">The final 6.4% rate in</span>
<span id="t155" style="position:absolute;left:867.50px;top:873.02px;font-size:3.8px;line-height:3.8px;color:#262626;font-weight:400;white-space:nowrap;transform:scaleX(0.9656);transform-origin:0 0;">the Terminal Period is</span>
<span id="t156" style="position:absolute;left:867.50px;top:877.77px;font-size:3.8px;line-height:3.8px;color:#262626;font-weight:400;white-space:nowrap;transform:scaleX(0.9356);transform-origin:0 0;">close to the average</span>
<span id="t157" style="position:absolute;left:867.50px;top:882.52px;font-size:3.8px;line-height:3.8px;color:#262626;font-weight:400;white-space:nowrap;transform:scaleX(0.8050);transform-origin:0 0;">WACC produced by the</span>
<span id="t158" style="position:absolute;left:867.50px;top:887.27px;font-size:3.8px;line-height:3.8px;color:#262626;font-weight:400;white-space:nowrap;transform:scaleX(0.8566);transform-origin:0 0;">three methods</span>
<span id="t159" style="position:absolute;left:867.50px;top:892.02px;font-size:3.8px;line-height:3.8px;color:#262626;font-weight:400;white-space:nowrap;transform:scaleX(0.9165);transform-origin:0 0;">described here.</span>
<div style="position:absolute;left:916px;top:790px;width:20px;height:4.6px;background:#C9C9C9;"></div>
<div style="position:absolute;left:916px;top:821.7px;width:20px;height:5px;background:#5B7BA8;"></div>
<div style="position:absolute;left:916px;top:860.6px;width:20px;height:5px;background:#5B7BA8;"></div>
<div style="position:absolute;left:916px;top:894.8px;width:20px;height:5.8px;background:#17375E;"></div>
<div style="position:absolute;left:917px;top:797px;width:20px;height:0.6px;background:#D0D0D0;"></div>
<div style="position:absolute;left:917px;top:802px;width:20px;height:0.6px;background:#D0D0D0;"></div>
<div style="position:absolute;left:917px;top:807px;width:20px;height:0.6px;background:#D0D0D0;"></div>
<div style="position:absolute;left:917px;top:812px;width:20px;height:0.6px;background:#D0D0D0;"></div>
<div style="position:absolute;left:917px;top:817px;width:20px;height:0.6px;background:#D0D0D0;"></div>
<div style="position:absolute;left:917px;top:832px;width:20px;height:0.6px;background:#D0D0D0;"></div>
<div style="position:absolute;left:917px;top:839px;width:20px;height:0.6px;background:#D0D0D0;"></div>
<div style="position:absolute;left:917px;top:846px;width:20px;height:0.6px;background:#D0D0D0;"></div>
<div style="position:absolute;left:917px;top:853px;width:20px;height:0.6px;background:#D0D0D0;"></div>
<div style="position:absolute;left:917px;top:870px;width:20px;height:0.6px;background:#D0D0D0;"></div>
<div style="position:absolute;left:917px;top:877px;width:20px;height:0.6px;background:#D0D0D0;"></div>
<div style="position:absolute;left:917px;top:884px;width:20px;height:0.6px;background:#D0D0D0;"></div>
<div style="position:absolute;left:917px;top:891px;width:20px;height:0.6px;background:#D0D0D0;"></div>
<div style="position:absolute;left:917px;top:906px;width:20px;height:0.6px;background:#D0D0D0;"></div>
<div style="position:absolute;left:917px;top:793.5px;width:12px;height:1.1px;background:#9A9A9A;"></div>
<div style="position:absolute;left:917px;top:800px;width:12px;height:1.1px;background:#9A9A9A;"></div>
<div style="position:absolute;left:917px;top:805px;width:12px;height:1.1px;background:#9A9A9A;"></div>
<div style="position:absolute;left:917px;top:815px;width:12px;height:1.1px;background:#9A9A9A;"></div>
<div style="position:absolute;left:917px;top:829.5px;width:12px;height:1.1px;background:#9A9A9A;"></div>
<div style="position:absolute;left:917px;top:836px;width:12px;height:1.1px;background:#9A9A9A;"></div>
<div style="position:absolute;left:917px;top:847.5px;width:12px;height:1.1px;background:#9A9A9A;"></div>
<div style="position:absolute;left:917px;top:868px;width:12px;height:1.1px;background:#9A9A9A;"></div>
<div style="position:absolute;left:917px;top:875px;width:12px;height:1.1px;background:#9A9A9A;"></div>
<div style="position:absolute;left:917px;top:886px;width:12px;height:1.1px;background:#9A9A9A;"></div>
<div style="position:absolute;left:917px;top:904px;width:12px;height:1.1px;background:#9A9A9A;"></div>
<span id="t160" style="position:absolute;left:862.80px;top:908.04px;font-size:4.9px;line-height:4.9px;color:#262626;font-weight:400;white-space:nowrap;">Goldman Stanley</span>
<span id="t161" style="position:absolute;left:1085.50px;top:909.88px;font-size:2.5px;line-height:2.5px;color:#666;font-weight:400;white-space:nowrap;">9</span>
<div style="position:absolute;left:932px;top:720px;width:10px;height:202px;background:#E6E6E6;"></div>
<span id="t162" style="position:absolute;left:28.50px;top:693.25px;font-size:15px;line-height:15px;color:#404040;font-weight:400;white-space:nowrap;transform:scaleX(0.9588);transform-origin:0 0;">2</span>
<span id="t163" style="position:absolute;left:305.50px;top:693.25px;font-size:15px;line-height:15px;color:#404040;font-weight:400;white-space:nowrap;transform:scaleX(0.9588);transform-origin:0 0;">3</span>
<span id="t164" style="position:absolute;left:582.50px;top:693.25px;font-size:15px;line-height:15px;color:#404040;font-weight:400;white-space:nowrap;transform:scaleX(0.9588);transform-origin:0 0;">4</span>
<span id="t165" style="position:absolute;left:859.50px;top:693.25px;font-size:15px;line-height:15px;color:#404040;font-weight:400;white-space:nowrap;transform:scaleX(0.9588);transform-origin:0 0;">5</span>
<svg style="position:absolute;left:0;top:0" width="932" height="922" viewBox="0 0 932 922"><path d="M18.5,76.5 H23 M33,76.5 H38.5 V83.5 M18.5,76.5 V99.5 H31" fill="none" stroke="#B8B8B8" stroke-width="1"/><rect x="19" y="77" width="19" height="22.5" fill="#E9E9E9"/><path d="M18.5,76.5 H23 M33,76.5 H38.5 V83.5 M18.5,76.5 V99.5 H31" fill="none" stroke="#B8B8B8" stroke-width="1"/><path d="M22.5,79.5 V76.5 H25.5 Q25.5,72.5 28,72.5 Q30.5,72.5 30.5,76.5 H33.5 V79.5 Z" fill="#EFEFEF" stroke="#B8B8B8" stroke-width="1"/><rect x="31.5" y="84.5" width="13" height="16.5" fill="#EDEDED" stroke="#B0B0B0" stroke-width="1"/><line x1="20" y1="96.5" x2="30" y2="96.5" stroke="#D0D0D0" stroke-width="1"/><path d="M56,72 L63.5,83 M65.5,72 L58,83" fill="none" stroke="#444" stroke-width="1.1"/><circle cx="58" cy="84.6" r="1.9" fill="none" stroke="#3A8FD8" stroke-width="1.3"/><circle cx="63.8" cy="84.6" r="1.9" fill="none" stroke="#3A8FD8" stroke-width="1.3"/><path d="M59.5,95.5 H54.5 V107.5 H59" fill="none" stroke="#333" stroke-width="1.1"/><path d="M59.5,98.5 H65.5 L68.5,101.5 V110.5 H59.5 Z" fill="#fff" stroke="#333" stroke-width="1.1"/><path d="M61.5,104.5 H66.5 M61.5,106.8 H66.5" stroke="#555" stroke-width="0.8"/><g transform="translate(61.5,125) rotate(45) scale(0.85)"><path d="M-5.5,1 H5.5 V8.5 Q0,10 -5.5,8.5 Z" fill="#F2A13A" stroke="#E08A2A" stroke-width="0.7"/><path d="M-2.5,3 V8.5 M1,3 V8.5" stroke="#FFF3E0" stroke-width="0.9"/><rect x="-5" y="-2" width="10" height="3" fill="#fff" stroke="#333" stroke-width="1"/><rect x="-1.8" y="-9.5" width="3.6" height="7.5" rx="1.5" fill="#fff" stroke="#333" stroke-width="1"/></g><path d="M153.5,155.5 V148.5 H160.5 M155.5,150.5 L160,155 M156.5,155.5 H160.5 V151.5" fill="none" stroke="#666" stroke-width="0.9"/><rect x="180.5" y="75.5" width="27" height="21" fill="none" stroke="#333" stroke-width="1"/><rect x="182.5" y="77.5" width="23" height="17" fill="none" stroke="#333" stroke-width="1"/><path d="M182.5,82.5 H205.5 M193.5,82.5 V94.5" stroke="#333" stroke-width="1"/><rect x="178" y="69" width="15" height="6.5" fill="#F3F2F1"/><rect x="178" y="69" width="4" height="12" fill="#F3F2F1"/><path d="M178,77.5 H193 M185.5,69.5 V85.5" stroke="#2FA04A" stroke-width="1.1"/><rect x="218.5" y="72.5" width="15" height="12" fill="none" stroke="#333" stroke-width="1"/><rect x="220.5" y="74.5" width="11" height="8" fill="none" stroke="#333" stroke-width="1"/><path d="M220.5,76.5 H231.5 M225.5,76.5 V82.5" stroke="#333" stroke-width="1"/><rect x="218.5" y="96.5" width="15" height="12" fill="none" stroke="#333" stroke-width="1"/><rect x="220.5" y="98.5" width="11" height="8" fill="none" stroke="#333" stroke-width="1"/><rect x="217" y="94" width="7.5" height="8" fill="#F3F2F1"/><path d="M219.5,97.5 H223 Q225.5,97.5 225.5,100.5 V103" fill="none" stroke="#3A8FD8" stroke-width="1.1"/><path d="M218.3,97.5 L220.8,95 M218.3,97.5 L220.8,100" stroke="#3A8FD8" stroke-width="1.1"/><rect x="218.5" y="119.5" width="15" height="1.5" fill="none" stroke="#2FA04A" stroke-width="1"/><rect x="218.5" y="123.5" width="15" height="11" fill="none" stroke="#333" stroke-width="1"/><rect x="220.5" y="125.5" width="11" height="7" fill="none" stroke="#333" stroke-width="1"/><rect x="310.5" y="76.5" width="151" height="21.5" fill="#E3E3E3" stroke="#C9C9C9" stroke-width="1"/><rect x="448.5" y="76.5" width="13" height="21.5" fill="#E8E8E8" stroke="#C9C9C9" stroke-width="1"/><polyline points="452.5,86 455,88.5 457.5,86" fill="none" stroke="#A0A0A0" stroke-width="0.9"/><rect x="464.5" y="76.5" width="45" height="21.5" fill="#E3E3E3" stroke="#C9C9C9" stroke-width="1"/><rect x="496.5" y="76.5" width="13" height="21.5" fill="#E8E8E8" stroke="#C9C9C9" stroke-width="1"/><polyline points="500.5,86 503,88.5 505.5,86" fill="none" stroke="#A0A0A0" stroke-width="0.9"/><path d="M515.8,91.5 L521,78.8 L526.2,91.5 M517.8,87 H524.2" fill="none" stroke="#A8A8A8" stroke-width="1.6"/><polyline points="527,81 529,78.8 531,81" fill="none" stroke="#A8A8A8" stroke-width="0.9"/><path d="M541.8,91.5 L546,81 L550.2,91.5 M543.5,87.8 H548.5" fill="none" stroke="#A8A8A8" stroke-width="1.5"/><polyline points="551,79.5 553,81.5 555,79.5" fill="none" stroke="#A8A8A8" stroke-width="0.9"/><line x1="562.5" y1="78" x2="562.5" y2="96" stroke="#D8D8D8" stroke-width="1"/><path d="M569.8,92 L574.5,79 L579.2,92 M571.5,87.5 H577.3" fill="none" stroke="#A8A8A8" stroke-width="1.5"/><path d="M577.5,90.5 L583,85 L586,88 L580.5,93.5 Z" fill="#F3F2F1" stroke="#A8A8A8" stroke-width="1.3"/><path d="M580.3,88 L583.3,91" stroke="#A8A8A8" stroke-width="2.6"/><line x1="364.5" y1="124.2" x2="373" y2="124.2" stroke="#A8A8A8" stroke-width="1"/><line x1="408.5" y1="118.5" x2="425.5" y2="118.5" stroke="#A8A8A8" stroke-width="1"/><path d="M434,124 H447 M434,124 L436,122.3 M434,124 L436,125.7 M447,124 L445,122.3 M447,124 L445,125.7" fill="none" stroke="#A8A8A8" stroke-width="0.9"/><polyline points="453.5,117 456.3,119.8 459,117" fill="none" stroke="#A8A8A8" stroke-width="0.9"/><polyline points="491.5,117.5 494.3,120.3 497,117.5" fill="none" stroke="#A8A8A8" stroke-width="0.9"/><line x1="508.5" y1="108.5" x2="508.5" y2="129" stroke="#D8D8D8" stroke-width="1"/><path d="M518.5,121.5 L527,113 Q528.5,111.5 530,113 Q531.5,114.5 530,116 L521.5,124.5 L517.5,124.5 Z" fill="none" stroke="#A8A8A8" stroke-width="1.1"/><rect x="516" y="124.2" width="16" height="2.8" fill="#ABABAB"/><polyline points="538.5,118 541.3,120.8 544,118" fill="none" stroke="#A8A8A8" stroke-width="0.9"/><path d="M557.5,122 L563,110.5 L568.5,122 M559.5,118.3 H566.5" fill="none" stroke="#A8A8A8" stroke-width="1.1"/><rect x="555" y="124" width="16" height="3" fill="#ABABAB"/><polyline points="577.5,118 580.3,120.8 583,118" fill="none" stroke="#A8A8A8" stroke-width="0.9"/><path d="M585.5,155.5 V148.5 H592.5 M587.5,150.5 L592,155 M588.5,155.5 H592.5 V151.5" fill="none" stroke="#777" stroke-width="0.9"/><rect x="608" y="79.5" width="2" height="2" fill="#A8A8A8"/><rect x="608" y="85.5" width="2" height="2" fill="#A8A8A8"/><rect x="608" y="91.5" width="2" height="2" fill="#A8A8A8"/><line x1="613" y1="80.5" x2="623.5" y2="80.5" stroke="#A8A8A8" stroke-width="1.0"/><line x1="613" y1="86.5" x2="623.5" y2="86.5" stroke="#A8A8A8" stroke-width="1.0"/><line x1="613" y1="92.5" x2="623.5" y2="92.5" stroke="#A8A8A8" stroke-width="1.0"/><polyline points="630.5,86 633.3,88.8 636,86" fill="none" stroke="#A8A8A8" stroke-width="0.9"/><text x="646.5" y="82.5" font-size="4.5" fill="#A8A8A8" font-family="Liberation Sans">1</text><text x="646.5" y="88.3" font-size="4.5" fill="#A8A8A8" font-family="Liberation Sans">2</text><text x="646.5" y="94" font-size="4.5" fill="#A8A8A8" font-family="Liberation Sans">3</text><line x1="652" y1="80.5" x2="662.5" y2="80.5" stroke="#A8A8A8" stroke-width="1.0"/><line x1="652" y1="86.5" x2="662.5" y2="86.5" stroke="#A8A8A8" stroke-width="1.0"/><line x1="652" y1="92.5" x2="662.5" y2="92.5" stroke="#A8A8A8" stroke-width="1.0"/><polyline points="670.5,86 673.3,88.8 676,86" fill="none" stroke="#A8A8A8" stroke-width="0.9"/><line x1="685.5" y1="78.5" x2="685.5" y2="96.5" stroke="#D8D8D8" stroke-width="1"/><line x1="694" y1="80.5" x2="708.5" y2="80.5" stroke="#A8A8A8" stroke-width="1.0"/><line x1="694" y1="92.5" x2="708.5" y2="92.5" stroke="#A8A8A8" stroke-width="1.0"/><line x1="700" y1="84.5" x2="708.5" y2="84.5" stroke="#A8A8A8" stroke-width="1.0"/><line x1="700" y1="88.5" x2="708.5" y2="88.5" stroke="#A8A8A8" stroke-width="1.0"/><path d="M698.5,86.1 H693.5 M695.5,84.1 L693.5,86.1 L695.5,88.1" fill="none" stroke="#A8A8A8" stroke-width="0.9"/><line x1="718" y1="80.5" x2="732.5" y2="80.5" stroke="#A8A8A8" stroke-width="1.0"/><line x1="718" y1="92.5" x2="732.5" y2="92.5" stroke="#A8A8A8" stroke-width="1.0"/><line x1="726" y1="84.5" x2="732.5" y2="84.5" stroke="#A8A8A8" stroke-width="1.0"/><line x1="726" y1="88.5" x2="732.5" y2="88.5" stroke="#A8A8A8" stroke-width="1.0"/><path d="M718,86.1 H723.5 M721.5,84.1 L723.5,86.1 L721.5,88.1" fill="none" stroke="#A8A8A8" stroke-width="0.9"/><line x1="740.5" y1="78.5" x2="740.5" y2="96.5" stroke="#D8D8D8" stroke-width="1"/><line x1="755" y1="80.5" x2="766" y2="80.5" stroke="#A8A8A8" stroke-width="1.0"/><line x1="755" y1="86.5" x2="766" y2="86.5" stroke="#A8A8A8" stroke-width="1.0"/><line x1="755" y1="92.5" x2="766" y2="92.5" stroke="#A8A8A8" stroke-width="1.0"/><path d="M750,79 V93.5 M748,81 L750,79 L752,81 M748,91.5 L750,93.5 L752,91.5" fill="none" stroke="#A8A8A8" stroke-width="0.9"/><polyline points="768,86 770.8,88.8 773.5,86" fill="none" stroke="#A8A8A8" stroke-width="0.9"/><line x1="608.5" y1="112.5" x2="623.5" y2="112.5" stroke="#A8A8A8" stroke-width="1.0"/><line x1="608.5" y1="120.5" x2="623.5" y2="120.5" stroke="#A8A8A8" stroke-width="1.0"/><line x1="608.5" y1="116.5" x2="619.5" y2="116.5" stroke="#A8A8A8" stroke-width="1.0"/><line x1="608.5" y1="124.5" x2="619.5" y2="124.5" stroke="#A8A8A8" stroke-width="1.0"/><line x1="632.5" y1="112.5" x2="647.5" y2="112.5" stroke="#A8A8A8" stroke-width="1.0"/><line x1="632.5" y1="120.5" x2="647.5" y2="120.5" stroke="#A8A8A8" stroke-width="1.0"/><line x1="634.5" y1="116.5" x2="645.5" y2="116.5" stroke="#A8A8A8" stroke-width="1.0"/><line x1="634.5" y1="124.5" x2="645.5" y2="124.5" stroke="#A8A8A8" stroke-width="1.0"/><line x1="656.5" y1="112.5" x2="671.5" y2="112.5" stroke="#A8A8A8" stroke-width="1.0"/><line x1="656.5" y1="120.5" x2="671.5" y2="120.5" stroke="#A8A8A8" stroke-width="1.0"/><line x1="660.5" y1="116.5" x2="671.5" y2="116.5" stroke="#A8A8A8" stroke-width="1.0"/><line x1="660.5" y1="124.5" x2="671.5" y2="124.5" stroke="#A8A8A8" stroke-width="1.0"/><line x1="680.5" y1="112.5" x2="695.5" y2="112.5" stroke="#A8A8A8" stroke-width="1.0"/><line x1="680.5" y1="116.5" x2="695.5" y2="116.5" stroke="#A8A8A8" stroke-width="1.0"/><line x1="680.5" y1="120.5" x2="695.5" y2="120.5" stroke="#A8A8A8" stroke-width="1.0"/><line x1="680.5" y1="124.5" x2="695.5" y2="124.5" stroke="#A8A8A8" stroke-width="1.0"/><line x1="706" y1="116.5" x2="718" y2="116.5" stroke="#A8A8A8" stroke-width="1.0"/><line x1="706" y1="120.5" x2="718" y2="120.5" stroke="#A8A8A8" stroke-width="1.0"/><line x1="706" y1="124.5" x2="718" y2="124.5" stroke="#A8A8A8" stroke-width="1.0"/><path d="M704.5,110.5 V126.5 M719.5,110.5 V126.5 M706.5,112.5 H717.5 M708,111 L706.5,112.5 L708,114 M716,111 L717.5,112.5 L716,114" fill="none" stroke="#A8A8A8" stroke-width="0.9"/><line x1="727.5" y1="108.5" x2="727.5" y2="130" stroke="#D8D8D8" stroke-width="1"/><line x1="736.5" y1="115.5" x2="741" y2="115.5" stroke="#A8A8A8" stroke-width="1.0"/><line x1="736.5" y1="121.5" x2="741" y2="121.5" stroke="#A8A8A8" stroke-width="1.0"/><line x1="745" y1="115.5" x2="749.5" y2="115.5" stroke="#A8A8A8" stroke-width="1.0"/><line x1="745" y1="121.5" x2="749.5" y2="121.5" stroke="#A8A8A8" stroke-width="1.0"/><polyline points="756,117 758.8,119.8 761.5,117" fill="none" stroke="#A8A8A8" stroke-width="0.9"/><path d="M786.5,72 V86 M784.5,84 L786.5,86 L788.5,84 M796,77.5 V86 M794,84 L796,86 L798,84" fill="none" stroke="#A8A8A8" stroke-width="1"/><text x="792" y="77" font-size="7.5" fill="#A8A8A8" font-family="Liberation Sans">A</text><path d="M788,96.5 H784.5 V109 H788 M796,96.5 H799.5 V109 H796" fill="none" stroke="#A8A8A8" stroke-width="1"/><path d="M786,102.8 H798 M792,95 V110.5 M790.5,97 L792,95.5 L793.5,97 M790.5,108.5 L792,110 L793.5,108.5" fill="none" stroke="#A8A8A8" stroke-width="0.9"/><text x="784" y="126" font-size="6" fill="#A8A8A8" font-family="Liberation Sans">2</text><path d="M787,121.5 H794 L796,123.5" fill="none" stroke="#A8A8A8" stroke-width="1"/><rect x="790.5" y="124.5" width="9.5" height="8" fill="#F3F2F1" stroke="#A8A8A8" stroke-width="1"/><line x1="792.5" y1="127.5" x2="798" y2="127.5" stroke="#A8A8A8" stroke-width="0.8"/><line x1="792.5" y1="130.5" x2="798" y2="130.5" stroke="#A8A8A8" stroke-width="0.8"/><path d="M922.5,155.5 V148.5 H929.5 M924.5,150.5 L929,155 M925.5,155.5 H929.5 V151.5" fill="none" stroke="#777" stroke-width="0.9"/><path d="M5.5,171.5 V188.5" stroke="#A8A8A8" stroke-width="1"/><rect x="8.5" y="173" width="7" height="4.5" fill="none" stroke="#A8A8A8" stroke-width="1"/><rect x="8.5" y="179" width="12" height="4.5" fill="none" stroke="#A8A8A8" stroke-width="1"/><path d="M8,186.5 H13 M8,186.5 L10,185 M8,186.5 L10,188" fill="none" stroke="#A8A8A8" stroke-width="0.8"/><polyline points="28,177.5 30.8,180.3 33.5,177.5" fill="none" stroke="#A8A8A8" stroke-width="0.9"/><line x1="43.5" y1="166.5" x2="43.5" y2="190" stroke="#D8D8D8" stroke-width="1"/><path d="M56.5,183 L62,172.5 L67.5,183 M58.5,179.5 H65.5" fill="none" stroke="#A8A8A8" stroke-width="1.1"/><rect x="54" y="184.5" width="16" height="3" fill="#ABABAB"/><polyline points="76.5,177.5 79.3,180.3 82,177.5" fill="none" stroke="#A8A8A8" stroke-width="0.9"/><path d="M96,178 L101,173 L106,178 L101,183 Z" fill="none" stroke="#A8A8A8" stroke-width="1.1"/><path d="M99,172 Q101,170.5 102.5,172.5" fill="none" stroke="#A8A8A8" stroke-width="1"/><path d="M106.5,179 Q108,182 106.5,183" fill="none" stroke="#A8A8A8" stroke-width="1.2"/><rect x="93" y="184.5" width="16.5" height="3" fill="#ABABAB"/><polyline points="115,177.5 117.8,180.3 120.5,177.5" fill="none" stroke="#A8A8A8" stroke-width="0.9"/><path d="M132.5,182.5 V173.5 H143" fill="none" stroke="#A8A8A8" stroke-width="1"/><path d="M136.5,182 L145.5,173 L147.5,175 L138.5,184 L136,184.5 Z" fill="none" stroke="#A8A8A8" stroke-width="1"/><rect x="132" y="184.5" width="16" height="3" fill="#ABABAB"/><polyline points="153.5,177.5 156.3,180.3 159,177.5" fill="none" stroke="#A8A8A8" stroke-width="0.9"/><path d="M174,172 V187.5 M172,185.5 L174,187.5 L176,185.5 M183.5,180 V187.5 M181.5,185.5 L183.5,187.5 L185.5,185.5" fill="none" stroke="#A8A8A8" stroke-width="1"/><text x="180" y="178.5" font-size="7" fill="#A8A8A8" font-family="Liberation Sans">A</text><path d="M205,175.8 H209.3 V180.5 M200.8,180.5 V184.6 H205.5" fill="none" stroke="#E39B2F" stroke-width="1.2"/><rect x="205.5" y="176.5" width="3" height="3.5" fill="#F8D9A0"/><rect x="197.75" y="172.75" width="5.8" height="5.8" fill="#fff" stroke="#2A2A2A" stroke-width="1.5"/><rect x="206.75" y="181.75" width="5.8" height="5.8" fill="#fff" stroke="#2A2A2A" stroke-width="1.5"/><polyline points="220,177.5 223,180.5 226,177.5" fill="none" stroke="#444" stroke-width="1.2"/><rect x="236.5" y="167" width="45" height="21.5" fill="#E3E3E3" stroke="#C9C9C9" stroke-width="1"/><rect x="268.5" y="167" width="13" height="21.5" fill="#E8E8E8" stroke="#C9C9C9" stroke-width="1"/><polyline points="272.5,176.5 275,179 277.5,176.5" fill="none" stroke="#A0A0A0" stroke-width="0.9"/><line x1="290.5" y1="166.5" x2="290.5" y2="190" stroke="#D8D8D8" stroke-width="1"/><rect x="301.5" y="174.5" width="15" height="10.5" fill="none" stroke="#A8A8A8" stroke-width="1.1"/><rect x="331" y="173.5" width="14" height="12" fill="none" stroke="#A8A8A8" stroke-width="1"/><text x="334.5" y="183" font-size="8" fill="#A8A8A8" font-family="Liberation Sans">A</text><path d="M355.5,181 V172.5 H363.5 V176" fill="#E0E0E0" stroke="#A8A8A8" stroke-width="1"/><circle cx="366" cy="183" r="4.8" fill="#F3F2F1" stroke="#A8A8A8" stroke-width="1.1"/><polyline points="377.5,177 380.3,179.8 383,177" fill="none" stroke="#A8A8A8" stroke-width="0.9"/><line x1="396.5" y1="172" x2="412.5" y2="187" stroke="#A8A8A8" stroke-width="1.2"/><circle cx="426.5" cy="177.5" r="5.3" fill="#D0D0D0" stroke="#A8A8A8" stroke-width="1"/><circle cx="431" cy="182" r="5.3" fill="#DADADA" fill-opacity="0.8" stroke="#A8A8A8" stroke-width="1"/><polyline points="443.5,177 446.3,179.8 449,177" fill="none" stroke="#A8A8A8" stroke-width="0.9"/><path d="M466,176.5 H474" stroke="#444" stroke-width="1.1"/><polyline points="466.5,179.5 470,182.5 473.5,179.5" fill="none" stroke="#444" stroke-width="1.1"/><path d="M721.5,540.5 V556 L725,552.8 L728,559.5 L730.5,558.4 L727.6,551.8 L732.3,551.8 Z" fill="#FFFFFF" stroke="#1A1A1A" stroke-width="1" stroke-linejoin="round"/></svg>
</body></html>
